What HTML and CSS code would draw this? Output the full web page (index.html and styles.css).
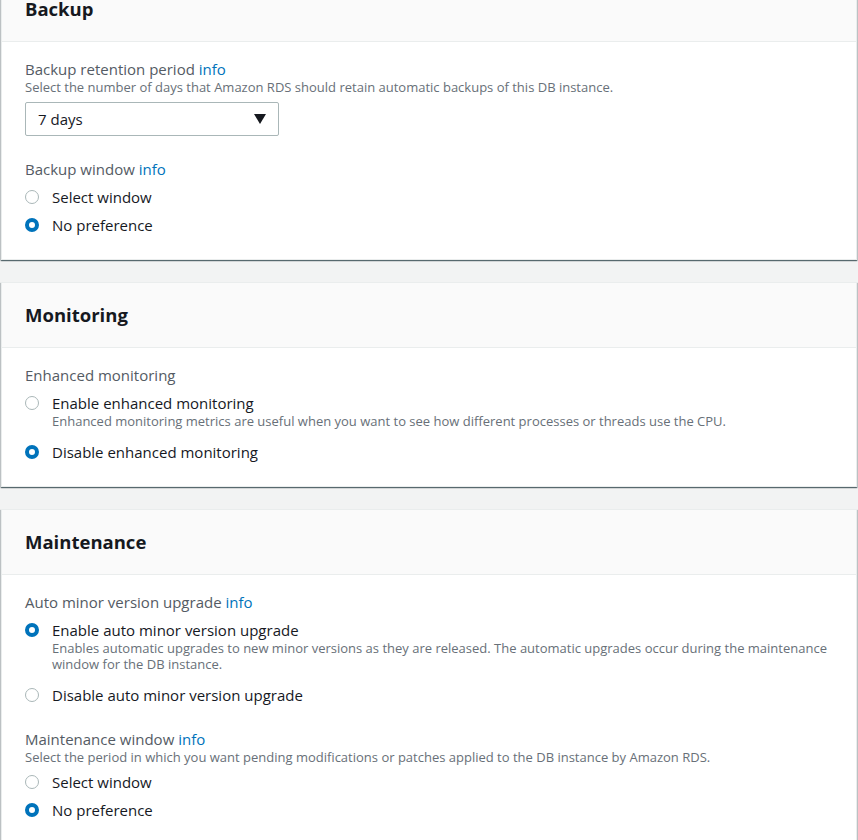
FILE: index.html
```html
<!DOCTYPE html>
<html>
<head>
<meta charset="utf-8">
<link rel="stylesheet" href="styles.css">
</head>
<body>
<div class="page">
  <section class="card card-first">
    <div class="card-header"><h2>Backup</h2></div>
    <div class="card-body first-body">
      <div class="field">
        <div class="label">Backup retention period <a class="info">info</a></div>
        <div class="desc">Select the number of days that Amazon RDS should retain automatic backups of this DB instance.</div>
        <div class="select"><span>7 days</span><span class="caret"></span></div>
      </div>
      <div class="field">
        <div class="label">Backup window <a class="info">info</a></div>
        <div class="radios">
          <div class="radio"><span class="dot"></span><div><div class="rtext">Select window</div></div></div>
          <div class="radio"><span class="dot on"></span><div><div class="rtext">No preference</div></div></div>
        </div>
      </div>
    </div>
  </section>

  <section class="card">
    <div class="card-header"><h2>Monitoring</h2></div>
    <div class="card-body">
      <div class="field">
        <div class="label">Enhanced monitoring</div>
        <div class="radios">
          <div class="radio"><span class="dot"></span><div><div class="rtext">Enable enhanced monitoring</div><div class="desc rdesc">Enhanced monitoring metrics are useful when you want to see how different processes or threads use the CPU.</div></div></div>
          <div class="radio"><span class="dot on"></span><div><div class="rtext">Disable enhanced monitoring</div></div></div>
        </div>
      </div>
    </div>
  </section>

  <section class="card">
    <div class="card-header"><h2>Maintenance</h2></div>
    <div class="card-body">
      <div class="field">
        <div class="label">Auto minor version upgrade <a class="info">info</a></div>
        <div class="radios">
          <div class="radio"><span class="dot on"></span><div><div class="rtext">Enable auto minor version upgrade</div><div class="desc rdesc">Enables automatic upgrades to new minor versions as they are released. The automatic upgrades occur during the maintenance window for the DB instance.</div></div></div>
          <div class="radio"><span class="dot"></span><div><div class="rtext">Disable auto minor version upgrade</div></div></div>
        </div>
      </div>
      <div class="field">
        <div class="label">Maintenance window <a class="info">info</a></div>
        <div class="desc">Select the period in which you want pending modifications or patches applied to the DB instance by Amazon RDS.</div>
        <div class="radios tight">
          <div class="radio"><span class="dot"></span><div><div class="rtext">Select window</div></div></div>
          <div class="radio"><span class="dot on"></span><div><div class="rtext">No preference</div></div></div>
        </div>
      </div>
    </div>
  </section>
</div>
</body>
</html>
```

FILE: styles.css
```css
html, body {
  margin: 0;
  padding: 0;
  background: #f2f3f3;
}
body {
  font-family: "Open Sans", "Noto Sans", Arial, sans-serif;
  color: #16191f;
  font-size: 15px;
}
.page {
  padding: 0 1px;
  display: flex;
  flex-direction: column;
  gap: 22px;
}
.card {
  background: #fff;
  border: 1px solid #eaeded;
  box-shadow: 0 1px 1px 0 rgba(0,28,36,.5), 1px 1px 1px 0 rgba(0,28,36,.15), -1px 1px 1px 0 rgba(0,28,36,.15);
}
.card-first {
  margin-top: -24px;
}
.card-header {
  background: #fafafa;
  border-bottom: 1px solid #eaeded;
  padding: 20px 23px;
  height: 24px;
  display: flex;
  align-items: center;
}
.card-header h2 {
  margin: 0;
  font-size: 18.5px;
  font-weight: 700;
  line-height: 24px;
  color: #16191f;
}
.card-body {
  padding: 17px 23px 24px;
  display: flex;
  flex-direction: column;
  gap: 24px;
}
.first-body {
  gap: 23px;
}
.label {
  color: #545b64;
  font-size: 15px;
  line-height: 20px;
}
.info {
  color: #0073bb;
  text-decoration: none;
}
.desc {
  color: #687078;
  font-size: 13px;
  line-height: 16px;
}
.rdesc {
  margin-bottom: 5px;
}
.select {
  margin-top: 7px;
  height: 32px;
  border: 1px solid #aab7b8;
  border-radius: 2px;
  display: flex;
  align-items: center;
  justify-content: space-between;
  padding: 0 12px 0 12px;
  box-sizing: content-box;
  width: 228px;
  color: #16191f;
  font-size: 15px;
}
.caret {
  width: 0;
  height: 0;
  border-left: 6px solid transparent;
  border-right: 6px solid transparent;
  border-top: 10px solid #16191f;
}
.radios {
  display: flex;
  flex-direction: column;
  gap: 8px;
  margin-top: 8px;
}
.radios.tight {
  margin-top: 7px;
}
.radio {
  display: flex;
  align-items: flex-start;
  gap: 13px;
}
.dot {
  flex: none;
  width: 14px;
  height: 14px;
  border-radius: 50%;
  border: 1px solid #aab7b8;
  box-sizing: border-box;
  margin-top: 3px;
  background: #fff;
}
.dot.on {
  border: 4px solid #0073bb;
}
.rtext {
  font-size: 15px;
  line-height: 20px;
  color: #16191f;
}
```
